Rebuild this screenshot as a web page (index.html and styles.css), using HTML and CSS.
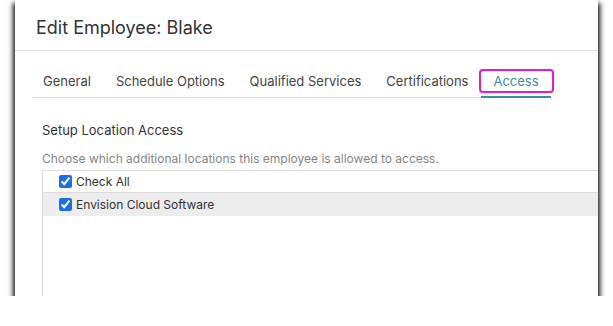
FILE: index.html
```html
<!DOCTYPE html>
<html lang="en">
<head>
  <meta charset="UTF-8">
  <meta name="viewport" content="width=device-width, initial-scale=1.0">
  <title>Edit Employee</title>
  <link rel="stylesheet" href="styles.css">
</head>
<body>
  <div class="panel">
    <header class="panel-header">
      <h1>Edit Employee: Blake</h1>
    </header>

    <ul class="tabs">
      <li class="tab">General</li>
      <li class="tab">Schedule Options</li>
      <li class="tab">Qualified Services</li>
      <li class="tab">Certifications</li>
      <li class="tab active">Access<span class="highlight"></span></li>
    </ul>

    <div class="content">
      <h2>Setup Location Access</h2>
      <p class="hint">Choose which additional locations this employee is allowed to access.</p>

      <div class="location-list">
        <label class="row">
          <input type="checkbox" checked>
          <span>Check All</span>
        </label>
        <label class="row selected">
          <input type="checkbox" checked>
          <span>Envision Cloud Software</span>
        </label>
      </div>
    </div>
  </div>
</body>
</html>
```

FILE: styles.css
```css
body {
  margin: 0;
  background: #fff;
  font-family: Inter, "Noto Sans", Arial, sans-serif;
  color: #333;
}
.panel {
  margin-left: 15px;
  width: 583px;
  height: 296px;
  background: #fff;
  overflow: hidden;
  box-shadow: 0 5px 5px 2px rgba(0,0,0,0.95);
}
.panel-header {
  height: 51px;
  box-sizing: border-box;
  padding: 17px 21px 0;
  border-bottom: 1px solid #e2e2e2;
}
h1 {
  margin: 0;
  font-size: 18px;
  font-weight: 400;
  line-height: 22px;
  color: #333;
}
.tabs {
  list-style: none;
  display: flex;
  margin: 14px 0 0 17px;
  padding: 0;
  width: 518px;
  border-bottom: 1px solid #dcdcdc;
}
.tab {
  position: relative;
  flex-shrink: 0;
  white-space: nowrap;
  padding: 8px 12.5px 7px;
  font-size: 13px;
  line-height: 16px;
  color: #444;
}
.tab:first-child {
  padding-left: 11px;
}
.tab.active {
  color: #3a8ea3;
  border-bottom: 2px solid #3a8ea3;
  margin-bottom: -1px;
}
.highlight {
  position: absolute;
  left: -2px;
  right: -3px;
  top: 4px;
  bottom: 3px;
  border: 2.5px solid #e31bd0;
  border-radius: 4px;
}
.content {
  padding: 24px 0 0 27px;
}
h2 {
  margin: 0;
  font-size: 13px;
  font-weight: 400;
  line-height: 16px;
  color: #333;
}
.hint {
  margin: 13px 0 4px;
  font-size: 12px;
  line-height: 15px;
  color: #858585;
}
.location-list {
  width: 620px;
  height: 140px;
  border: 1px solid #dcdcdc;
}
.row {
  display: flex;
  align-items: center;
  gap: 4px;
  padding-left: 16px;
  height: 21px;
  font-size: 12px;
  color: #333;
}
.row.selected {
  height: 23px;
  background: #ececec;
  border-top: 1px solid #dcdcdc;
}
.row input {
  margin: 0;
  width: 13px;
  height: 13px;
  accent-color: #1a6fe8;
}
```
